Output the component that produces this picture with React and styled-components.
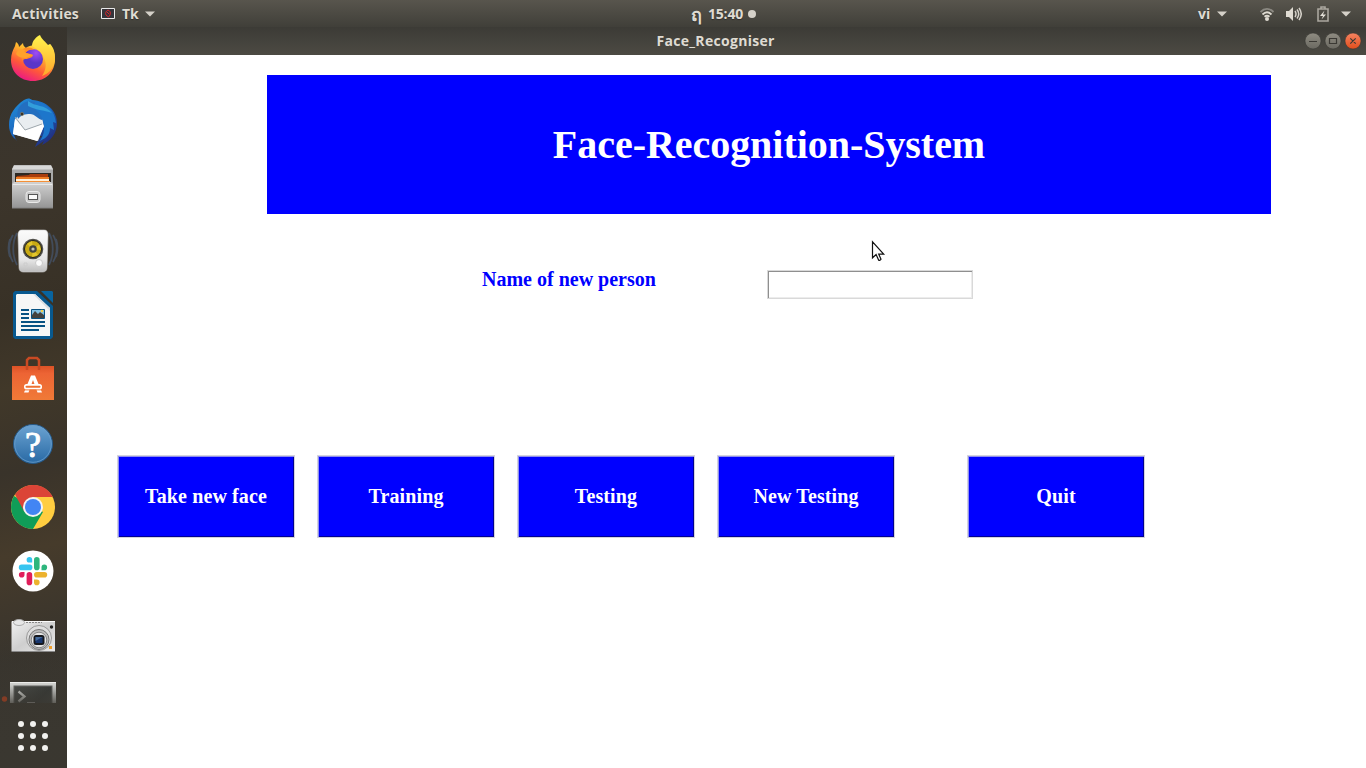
import React from "react";
import styled, { createGlobalStyle } from "styled-components";

const GlobalStyle = createGlobalStyle`
  * { box-sizing: border-box; }
  body { margin: 0; background: #fff; overflow: hidden; }
`;

const uiFont = `"Open Sans", "Noto Sans", sans-serif`;
const serifFont = `"Liberation Serif", serif`;

const Desktop = styled.div`
  width: 1366px;
  height: 768px;
  display: flex;
  flex-direction: column;
  background: #fff;
  overflow: hidden;
`;

const TopBar = styled.header`
  height: 27px;
  flex: none;
  display: grid;
  grid-template-columns: 1fr auto 1fr;
  align-items: center;
  background: linear-gradient(#58554d, #403f39);
  color: #dfdbd2;
  font: 700 14px/26px ${uiFont};
`;

const BarSide = styled.div`
  display: flex;
  align-items: center;
  height: 27px;
  justify-content: ${(p) => (p.$end ? "flex-end" : "flex-start")};
  padding: ${(p) => (p.$end ? "0 15px 0 0" : "0 0 0 12px")};
`;

const Clock = styled.div`
  display: flex;
  align-items: center;
  width: 66px;
  height: 27px;
  margin-left: 82px;
`;

const BarText = styled.span`
  width: ${(p) => p.$width}px;
  letter-spacing: ${(p) => p.$spacing || 0}px;
  white-space: nowrap;
  margin-right: ${(p) => p.$gap || 0}px;
  text-shadow: 0 1px 1px rgba(0, 0, 0, 0.35);
`;

const ThaiMark = styled(BarText)`
  font-size: 18px;
  font-weight: 600;
`;

const BarIcon = styled.svg`
  display: block;
  flex: none;
  margin-right: ${(p) => p.$gap || 0}px;
`;

const Body = styled.div`
  flex: 1;
  display: flex;
  min-height: 0;
`;

const Dock = styled.nav`
  width: 67px;
  flex: none;
  display: flex;
  flex-direction: column;
  background:
    linear-gradient(rgba(52, 50, 44, 0) 82%, rgba(58, 55, 48, 0.9) 96%),
    linear-gradient(165deg, #37342e 0%, #3c352b 22%, #383126 38%, #413829 48%, #39332a 59%, #463b2b 70%, #38342d 84%, #3a3831 100%);
`;

const DockList = styled.div`
  height: 676px;
  overflow: hidden;
`;

const DockIcon = styled.svg`
  display: block;
  width: 67px;
  height: 64px;
`;

const AppsButton = styled.svg`
  display: block;
  width: 67px;
  height: 65px;
`;

const Window = styled.main`
  flex: 1;
  display: flex;
  flex-direction: column;
`;

const TitleBar = styled.div`
  height: 28px;
  flex: none;
  display: grid;
  grid-template-columns: 1fr auto 1fr;
  align-items: center;
  background: linear-gradient(#3c3b36, #4c4a43);
  color: #dfdbd2;
`;

const WindowTitle = styled.div`
  grid-column: 2;
  width: 119px;
  margin-right: 1px;
  font: 700 14px/28px ${uiFont};
  letter-spacing: 0.3px;
  white-space: nowrap;
`;

const WindowControls = styled.svg`
  justify-self: end;
  display: block;
`;

const Content = styled.section`
  flex: 1;
  padding-top: 20px;
  background: #fff;
`;

const Banner = styled.h1`
  width: 1004px;
  height: 139px;
  margin: 0 0 0 200px;
  background: #0000ff;
  color: #fff;
  font: 700 40px/139px ${serifFont};
  letter-spacing: -0.04px;
  text-align: center;
  white-space: nowrap;
`;

const FormRow = styled.div`
  display: flex;
  height: 29px;
  margin: 56px 0 0 415px;
`;

const Label = styled.label`
  width: 285px;
  color: #0000ff;
  font: 700 20px/18px ${serifFont};
  white-space: nowrap;
`;

const NameInput = styled.input`
  width: 206px;
  height: 29px;
  margin: 0;
  padding: 0 4px;
  border: 1px solid #d9d9d9;
  border-radius: 0;
  outline: none;
  background: #fff;
  box-shadow: inset 1px 1px 0 #8f8f8f, inset -1px -1px 0 #ececec;
`;

const ButtonRow = styled.div`
  display: flex;
  gap: 22px;
  margin: 156px 0 0 50px;
`;

const ActionButton = styled.button`
  width: 178px;
  height: 83px;
  margin: 0 0 0 ${(p) => p.$indent || 0}px;
  padding: 0 0 1px;
  border: 1px solid #d4d4dc;
  border-radius: 0;
  background: #0000ff;
  box-shadow: inset 1px 1px 0 #8f8fee, inset -1px -1px 0 #000094;
  color: #fff;
  font: 700 20px/24px ${serifFont};
  letter-spacing: 0.12px;
`;

const Pointer = styled.svg`
  position: absolute;
  left: 870px;
  top: 240px;
`;

function Caret({ gap }) {
  return (
    <BarIcon width="10" height="6" $gap={gap}>
      <path d="M0 .5h10L5 5.5z" fill="#d5d1c9" />
    </BarIcon>
  );
}

function Firefox() {
  return (
    <DockIcon>
      <defs>
        <linearGradient id="ffBody" x1=".8" y1="0" x2=".25" y2="1">
          <stop offset="0" stopColor="#fff14a" />
          <stop offset=".35" stopColor="#ffb52c" />
          <stop offset=".65" stopColor="#ff5a38" />
          <stop offset="1" stopColor="#e9128c" />
        </linearGradient>
        <radialGradient id="ffGlobe" cx=".65" cy=".2">
          <stop offset="0" stopColor="#a04cf5" />
          <stop offset="1" stopColor="#5a36c8" />
        </radialGradient>
        <linearGradient id="ffTail" x1="0" y1="0" x2="0" y2="1">
          <stop offset="0" stopColor="#fff34d" />
          <stop offset="1" stopColor="#ffa72c" />
        </linearGradient>
      </defs>
      <path d="M15 19l1-4c2 1 3 3 3 5l4-4c0 3 2 4 3 5 4-3 11-4 16 0l8-4c3 4 5 9 5 15 0 13-9 22-22 22S11 45 11 33c0-6 2-10 4-14z" fill="url(#ffBody)" />
      <path d="M32 19c0-5 4-9 8-11 2 5 6 7 8 10l2 3v-4c4 4 5 9 5 14 0 10-7 16-13 18 4-6 5-12 2-18-2-5-6-9-12-12z" fill="url(#ffTail)" />
      <circle cx="33" cy="32" r="10" fill="url(#ffGlobe)" />
      <path d="M23 22c5-3 10-1 11 1-4-1-8 1-8 3 3 1 6 1 7 2 0 2-3 3-6 4-2 0-4 0-4 2-3-4-3-9 0-12z" fill="#ff8a29" />
      <path d="M16 27c1-4 5-6 10-4-2 1-2 2 0 3l7 2-7 3c-4 0-8-1-10-4z" fill="#ffa12c" />
    </DockIcon>
  );
}

function Thunderbird() {
  return (
    <DockIcon>
      <defs>
        <linearGradient id="tbBody" x1="0" y1="0" x2=".8" y2="1">
          <stop offset="0" stopColor="#2393dc" />
          <stop offset=".5" stopColor="#1a65be" />
          <stop offset="1" stopColor="#232878" />
        </linearGradient>
      </defs>
      <path d="M24 9c3-2 6-2 8 0 15 1 25 11 25 23 0 10-6 18-15 22l2-4-9 6c2-5 4-8 7-11L14 44l2 5 4 2c-7-3-11-9-11-17 0-11 6-19 15-25z" fill="url(#tbBody)" />
      <path d="M15 28l6-5 11-1 10 5 2 8-6 15-25-7z" fill="#e9edf0" />
      <path d="M15 28l10 11 17-6 2 2-7 15-24-7z" fill="#fff" />
      <path d="M15 26l10 13 17-6" fill="none" stroke="#9da6ac" strokeWidth="1" />
      <path d="M20 15c5-6 16-7 23 2 3 4 1 8-1 12-4-1-7-6-12-6s-9 1-12 5c-1-5-1-9 2-13z" fill="#236fc0" />
      <path d="M35 10c12 2 20 10 21 22l-3-1 1 8-4-2c0 7-4 10-10 13 7-10 5-24-5-32z" fill="#1d76cb" />
      <path d="M28 10c7 6 17 3 24 12-8-3-17-3-24-7z" fill="#329edb" />
      <circle cx="22" cy="23" r="1.7" fill="#3c3328" stroke="#9b9275" strokeWidth=".5" />
    </DockIcon>
  );
}

function Files() {
  return (
    <DockIcon>
      <defs>
        <linearGradient id="fileFront" x1="0" y1="0" x2="0" y2="1">
          <stop stopColor="#d2d2d2" />
          <stop offset="1" stopColor="#949494" />
        </linearGradient>
      </defs>
      <path d="M14 10h37l2 4v37H12V14z" fill="#a9a9a9" />
      <path d="M14 10.5h37l2 4H12z" fill="#d8d8d8" />
      <path d="M15 18h36v12H15z" fill="#2e2822" />
      <path d="M17 21l12-1 1-1h18v11H16v-7z" fill="#a83c0c" />
      <path d="M16 22h33v6H16z" fill="#ec7b22" />
      <path d="M16 24h33v2H16z" fill="#fff1dc" />
      <path d="M16 26h34v3H16z" fill="#f49038" />
      <path d="M12 53V29l2-2h37l2 2v24z" fill="url(#fileFront)" />
      <path d="M13 29.5h39" stroke="#e8e8e8" />
      <rect x="26" y="36.5" width="14" height="11" rx="3" fill="#c9c9c9" stroke="#e9e9e9" />
      <rect x="28.5" y="39.5" width="9" height="5" fill="#fafafa" stroke="#555" />
      <path d="M12 53h41" stroke="#828282" />
    </DockIcon>
  );
}

function Rhythmbox() {
  return (
    <DockIcon>
      <defs>
        <linearGradient id="rbBody" x1="0" y1="0" x2="0" y2="1">
          <stop stopColor="#fbfbfb" />
          <stop offset=".7" stopColor="#e7e7e7" />
          <stop offset="1" stopColor="#bcbcbc" />
        </linearGradient>
      </defs>
      <g fill="none" stroke="#4d6b96" strokeOpacity=".45" strokeWidth="1.8">
        <path d="M17 14c-5 9-5 23 0 32M13 16c-5 8-5 19 0 27M10 20c-2 6-2 12 0 18" />
        <path d="M49 14c5 9 5 23 0 32M53 16c5 8 5 19 0 27M56 20c2 6 2 12 0 18" />
      </g>
      <path d="M22 11h22c3 0 4 2 4 5l-1 32c0 4-2 5-5 5H24c-3 0-5-1-5-5l-1-32c0-3 1-5 4-5z" fill="url(#rbBody)" stroke="#ccc" strokeWidth=".6" />
      <circle cx="33" cy="30" r="10.3" fill="#51504b" />
      <circle cx="33" cy="30" r="8.5" fill="#c9aa14" stroke="#24251f" strokeWidth="1" />
      <path d="M33 30l-6-5 5-3zM33 30l6-4 2 5zM33 30l5 6-6 2z" fill="#e3c62d" />
      <circle cx="33" cy="30" r="3.8" fill="#45463f" />
      <circle cx="33" cy="30" r="1.6" fill="#c4c4b6" />
      <circle cx="39" cy="44" r="3.5" fill="#fafafa" stroke="#c9c9c9" />
      <path d="M24 44h3v3h-3z" fill="none" stroke="#ccc" />
    </DockIcon>
  );
}

function Writer() {
  return (
    <DockIcon>
      <path d="M15 8h22l16 15v31l-2 2H15l-2-2V10z" fill="#08598f" />
      <path d="M41 8h11l1 1v11z" fill="#08649f" />
      <path d="M17 11h18l15 14v28H16V12z" fill="#f6f7f6" />
      <path d="M35 11l15 14v3L33 11z" fill="#d9dde0" />
      <path d="M21 27h8M21 31h8M21 35h8M21 39h24M21 43h24M21 47h18" stroke="#075282" strokeWidth="2" />
      <path d="M31.5 26.5h13v9h-13z" fill="#80c0e3" stroke="#075282" />
      <path d="M32 35v-3l3-4 3 3 2-2 4 3v3z" fill="#43423d" />
      <circle cx="42" cy="28" r="1.3" fill="#f3ce48" />
    </DockIcon>
  );
}

function Software() {
  return (
    <DockIcon>
      <defs>
        <linearGradient id="bag" x1="0" y1="0" x2="0" y2="1">
          <stop stopColor="#dc5226" />
          <stop offset=".22" stopColor="#ed6434" />
          <stop offset="1" stopColor="#f07a37" />
        </linearGradient>
      </defs>
      <path d="M12 19h42v34H12z" fill="url(#bag)" />
      <path d="M27 23V13l2-2h8l2 2v10" fill="none" stroke="#c94a23" strokeWidth="2.5" />
      <path d="M31 28.5h4l7 17h-4.5L33 33l-4.5 12.5H24z" fill="#fff" />
      <rect x="24" y="37" width="18" height="5.4" rx="2.5" fill="#fff" />
      <rect x="25.5" y="38.8" width="15" height="2" rx="1" fill="#ee7132" />
      <path d="M23 42.4h20v1H23z" fill="#ee7437" />
    </DockIcon>
  );
}

const HelpMark = styled.text`
  font: 400 36px ${serifFont};
  fill: #fff;
  stroke: #fff;
  stroke-width: 0.9px;
`;

function Help() {
  return (
    <DockIcon>
      <defs>
        <linearGradient id="help" x1="0" y1="0" x2="0" y2="1">
          <stop stopColor="#6ca3d2" />
          <stop offset="1" stopColor="#2869a4" />
        </linearGradient>
      </defs>
      <circle cx="33" cy="33" r="19.5" fill="url(#help)" stroke="#255887" />
      <circle cx="33" cy="33" r="18.3" fill="none" stroke="#6a9dca" strokeWidth=".8" />
      <HelpMark x="33" y="45.5" textAnchor="middle">?</HelpMark>
    </DockIcon>
  );
}

function Chrome() {
  return (
    <DockIcon>
      <circle cx="33" cy="32" r="22" fill="#ffcd40" />
      <path d="M33 32L14 21A22 22 0 0 0 33 54l10-17z" fill="#109d58" />
      <path d="M33 22h19.8A22 22 0 0 0 15 19.5L24.5 37z" fill="#db4437" />
      <circle cx="33" cy="32" r="10" fill="#f3f3f3" />
      <circle cx="33" cy="32" r="8" fill="#4285f4" />
    </DockIcon>
  );
}

function Slack() {
  return (
    <DockIcon>
      <circle cx="33" cy="32" r="20.5" fill="#fff" />
      <g fill="none" strokeWidth="5.6" strokeLinecap="round">
        <path d="M21.6 28.4h8" stroke="#36c5f0" />
        <path d="M36.8 20.8v7.6" stroke="#2eb67d" />
        <path d="M36.8 35.8h7.6" stroke="#ecb22e" />
        <path d="M29.4 35.8v7.6" stroke="#e01e5a" />
      </g>
      <path d="M32.2 23.5h-2.8a2.8 2.8 0 1 1 2.8-2.7z" fill="#36c5f0" />
      <path d="M41.5 31.2v-2.8a2.8 2.8 0 1 1 2.8 2.8z" fill="#2eb67d" />
      <path d="M34 40.6h2.8a2.8 2.8 0 1 1-2.8 2.8z" fill="#ecb22e" />
      <path d="M24.5 33v2.8a2.8 2.8 0 1 1-2.8-2.8z" fill="#e01e5a" />
    </DockIcon>
  );
}

function Camera() {
  return (
    <DockIcon>
      <defs>
        <linearGradient id="cam" x1="0" y1="0" x2="1" y2="1">
          <stop stopColor="#f1f1f1" />
          <stop offset=".5" stopColor="#cfcfcf" />
          <stop offset="1" stopColor="#e9e9e9" />
        </linearGradient>
      </defs>
      <rect x="11.5" y="18" width="43.5" height="31" rx="1" fill="url(#cam)" />
      <path d="M12 18.5h43" stroke="#fafafa" />
      <path d="M12 48.5h43" stroke="#888" />
      <ellipse cx="19" cy="19.5" rx="5.5" ry="3" fill="#e7e7e7" stroke="#aaa" />
      <path d="M26 19.5h16" stroke="#888" strokeDasharray="2 1" />
      <circle cx="39" cy="35" r="12.5" fill="#dedede" stroke="#999" />
      <circle cx="39" cy="36.5" r="10" fill="#bdbdbd" stroke="#777" />
      <circle cx="39" cy="37" r="7.8" fill="#e5e5e5" stroke="#858585" />
      <rect x="33.5" y="32" width="11" height="10" rx="2.5" fill="#16181e" />
      <rect x="35.5" y="34" width="7" height="6" fill="#18366e" />
      <path d="M35.5 34h7l-7 4z" fill="#466c9c" />
      <circle cx="51.5" cy="24" r="1.7" fill="#222" />
      <path d="M49 43h3v3h-3z" fill="#f1a02c" />
    </DockIcon>
  );
}

function Terminal() {
  return (
    <DockIcon>
      <defs>
        <linearGradient id="termFade" x1="0" y1="0" x2="0" y2="1">
          <stop stopColor="#3a3832" stopOpacity="0" />
          <stop offset="1" stopColor="#3a3832" stopOpacity=".75" />
        </linearGradient>
        <linearGradient id="termScreen" x1="0" y1="0" x2="1" y2="1">
          <stop stopColor="#4b4d49" />
          <stop offset=".5" stopColor="#373936" />
          <stop offset="1" stopColor="#4c4e4a" />
        </linearGradient>
      </defs>
      <rect x="10" y="15" width="46" height="44" rx="1" fill="#cfd0cd" />
      <path d="M10 15.5h46" stroke="#ececea" />
      <rect x="14" y="19" width="38" height="40" fill="url(#termScreen)" stroke="#686967" />
      <path d="M18.5 24.5l6 5-6 5" fill="none" stroke="#d6d7d3" strokeWidth="2.3" />
      <path d="M27 36h8" stroke="#ccc" strokeWidth="1.8" />
      <rect x="9" y="17" width="48" height="19" fill="url(#termFade)" />
      <circle cx="4.5" cy="32" r="2.7" fill="#833c25" />
    </DockIcon>
  );
}

const dockApps = [Firefox, Thunderbird, Files, Rhythmbox, Writer, Software, Help, Chrome, Slack, Camera, Terminal];
const dots = [21, 33, 45];

const actions = [
  { label: "Take new face" },
  { label: "Training" },
  { label: "Testing" },
  { label: "New Testing" },
  { label: "Quit", indent: 50 },
];

export default function App() {
  return (
    <>
      <GlobalStyle />
      <Desktop>
        <TopBar>
          <BarSide>
            <BarText $width={68} $gap={21} $spacing={0.2}>Activities</BarText>
            <BarIcon width="14" height="11" $gap={7}>
              <path d="M.5.5h13v10H.5z" fill="#35353b" stroke="#e8e8e8" />
              <path d="M7 2c2 1 3 2 2 5L7.5 9 5 7c-1-2 0-4 2-5zM6 4l2 2" fill="none" stroke="#d3262c" />
            </BarIcon>
            <BarText $width={18} $gap={5}>Tk</BarText>
            <Caret />
          </BarSide>
          <Clock>
            <ThaiMark $width={17}>ฤ</ThaiMark>
            <BarText $width={36} $gap={4} $spacing={-0.2}>15:40</BarText>
            <BarIcon width="8" height="8"><circle cx="4" cy="4" r="4" fill="#d5d1c9" /></BarIcon>
          </Clock>
          <BarSide $end>
            <BarText $width={12} $gap={7}>vi</BarText>
            <Caret gap={32} />
            <BarIcon width="16" height="14" $gap={11}>
              <g fill="none" strokeWidth="1.8">
                <path d="M1.5 5c4-4 9-4 13 0" stroke="#8b8982" />
                <path d="M3.5 7.5c3-3 6-3 9 0M5.5 9.7c2-1.6 3-1.6 5 0" stroke="#dfdbd2" />
              </g>
              <circle cx="8" cy="12" r="2" fill="#dfdbd2" />
            </BarIcon>
            <BarIcon width="16" height="14" $gap={15}>
              <path d="M0 4h3l4-4v14l-4-4H0z" fill="#dfdbd2" />
              <path d="M9 4q2 3 0 6M11 2.5q3.5 4.5 0 9M13 1q4.5 6 0 12" fill="none" stroke="#d5d1c9" strokeWidth="1.5" />
            </BarIcon>
            <BarIcon width="12" height="16" $gap={12}>
              <path d="M1 3h10v12H1zM4 3V1h4v2" fill="none" stroke="#aaa79f" strokeWidth="1.6" />
              <path d="M7.5 4.5L3 10h3l-1.5 3.5L9 8.5H6z" fill="#e4e0d8" />
            </BarIcon>
            <Caret />
          </BarSide>
        </TopBar>
        <Body>
          <Dock>
            <DockList>
              {dockApps.map((Icon) => <Icon key={Icon.name} />)}
            </DockList>
            <AppsButton>
              {dots.map((x) => dots.map((y) => <circle key={`${x}-${y}`} cx={x} cy={y} r="3" fill="#f2f1ef" />))}
            </AppsButton>
          </Dock>
          <Window>
            <TitleBar>
              <WindowTitle>Face_Recogniser</WindowTitle>
              <WindowControls width="62" height="28">
                <defs>
                  <linearGradient id="ctl" x1="0" y1="0" x2="0" y2="1"><stop stopColor="#8f8c82" /><stop offset="1" stopColor="#6b6961" /></linearGradient>
                  <linearGradient id="close" x1="0" y1="0" x2="0" y2="1"><stop stopColor="#f58361" /><stop offset="1" stopColor="#e24e1c" /></linearGradient>
                </defs>
                <circle cx="9" cy="14" r="8" fill="url(#ctl)" stroke="#33322e" strokeWidth=".5" />
                <circle cx="29" cy="14" r="8" fill="url(#ctl)" stroke="#33322e" strokeWidth=".5" />
                <circle cx="49" cy="14" r="8" fill="url(#close)" stroke="#33322e" strokeWidth=".5" />
                <path d="M5 14.5h8M25.5 11.5h7v5h-7zM46.3 11.3l5.4 5.4M51.7 11.3l-5.4 5.4" fill="none" stroke="#3b3934" strokeWidth="1.2" />
              </WindowControls>
            </TitleBar>
            <Content>
              <Banner>Face-Recognition-System</Banner>
              <FormRow>
                <Label htmlFor="person">Name of new person</Label>
                <NameInput id="person" />
              </FormRow>
              <ButtonRow>
                {actions.map(({ label, indent }) => (
                  <ActionButton key={label} type="button" $indent={indent}>{label}</ActionButton>
                ))}
              </ButtonRow>
            </Content>
          </Window>
        </Body>
        <Pointer width="16" height="24">
          <path d="M2.5 1.8v16l3.6-3.3 2.5 5.6q1.5.8 2.4-.8l-2.3-5.2h5z" fill="#fff" stroke="#111" strokeWidth="1.2" />
        </Pointer>
      </Desktop>
    </>
  );
}
